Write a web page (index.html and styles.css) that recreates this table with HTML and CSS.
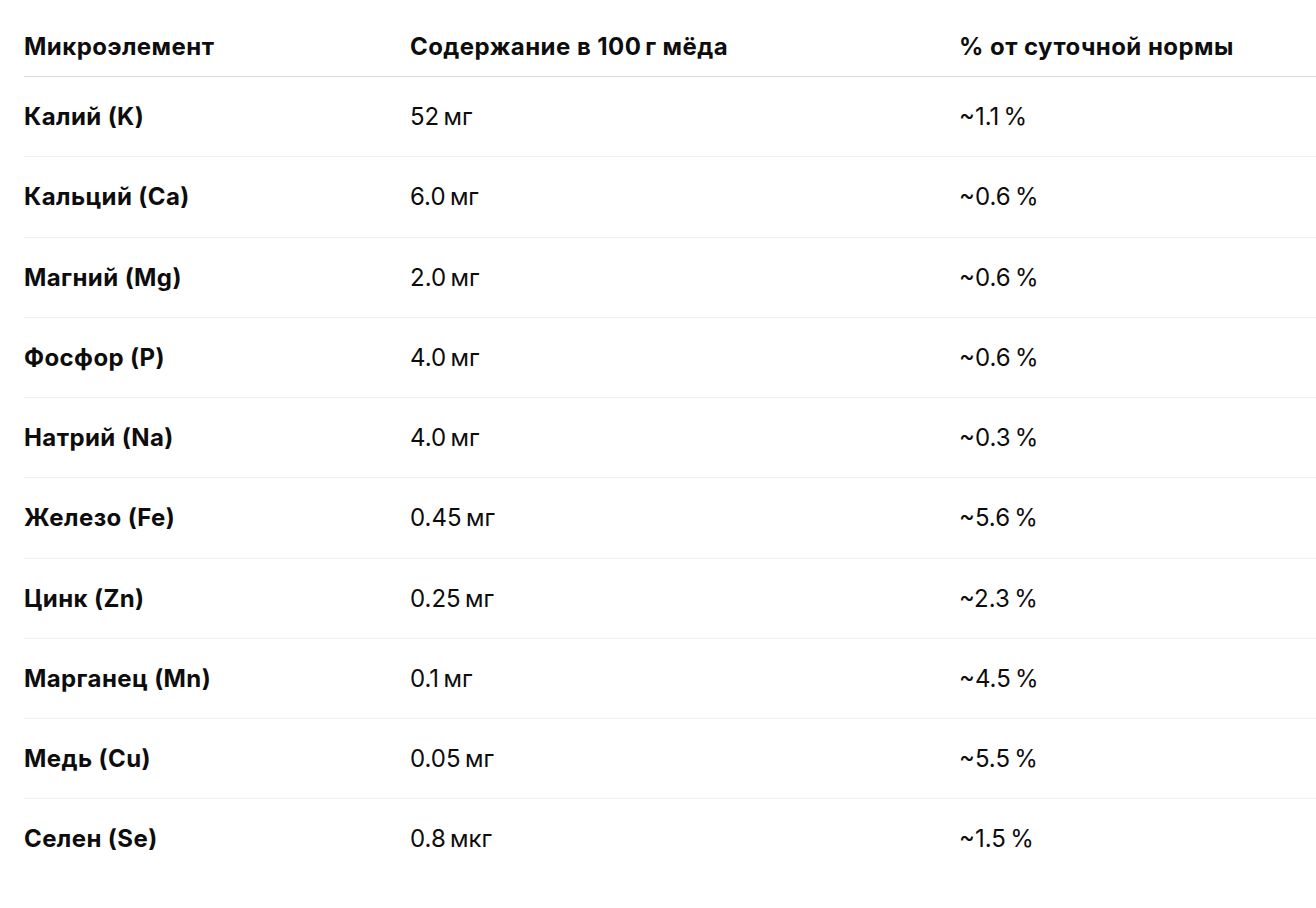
FILE: index.html
```html
<!DOCTYPE html>
<html lang="ru">
<head>
<meta charset="utf-8">
<title>Микроэлементы мёда</title>
<link rel="stylesheet" href="styles.css">
</head>
<body>
<div class="wrap">
<table class="tbl">
  <colgroup>
    <col class="c1"><col class="c2"><col class="c3">
  </colgroup>
  <thead>
    <tr><th>Микроэлемент</th><th>Содержание в 100&#8239;г мёда</th><th>% от суточной нормы</th></tr>
  </thead>
  <tbody>
    <tr><td class="name">Калий (K)</td><td>52&#8239;мг</td><td>~1.1&#8239;%</td></tr>
    <tr><td class="name">Кальций (Ca)</td><td>6.0&#8239;мг</td><td>~0.6&#8239;%</td></tr>
    <tr><td class="name">Магний (Mg)</td><td>2.0&#8239;мг</td><td>~0.6&#8239;%</td></tr>
    <tr><td class="name">Фосфор (P)</td><td>4.0&#8239;мг</td><td>~0.6&#8239;%</td></tr>
    <tr><td class="name">Натрий (Na)</td><td>4.0&#8239;мг</td><td>~0.3&#8239;%</td></tr>
    <tr><td class="name">Железо (Fe)</td><td>0.45&#8239;мг</td><td>~5.6&#8239;%</td></tr>
    <tr><td class="name">Цинк (Zn)</td><td>0.25&#8239;мг</td><td>~2.3&#8239;%</td></tr>
    <tr><td class="name">Марганец (Mn)</td><td>0.1&#8239;мг</td><td>~4.5&#8239;%</td></tr>
    <tr><td class="name">Медь (Cu)</td><td>0.05&#8239;мг</td><td>~5.5&#8239;%</td></tr>
    <tr class="last"><td class="name">Селен (Se)</td><td>0.8&#8239;мкг</td><td>~1.5&#8239;%</td></tr>
  </tbody>
</table>
</div>
</body>
</html>
```
FILE: styles.css
```css
html, body {
  margin: 0;
  padding: 0;
  background: #ffffff;
}
body {
  font-family: Inter, "Noto Sans", "Liberation Sans", sans-serif;
  color: #0d0d0d;
  overflow: hidden;
}
.wrap {
  padding: 31px 0 0 24px;
}
.tbl {
  border-collapse: collapse;
  width: 1320px;
  table-layout: fixed;
  font-size: 24px;
  line-height: 32px;
}
.c1 { width: 386px; }
.c2 { width: 549px; }
.c3 { width: auto; }
.tbl th {
  text-align: left;
  font-weight: 700;
  letter-spacing: 0.45px;
  padding: 0 0 13px 0;
  border-bottom: 1px solid #d9d9d9;
}
.tbl td {
  padding: 24px 0 23.25px 0;
  border-bottom: 1px solid #efefef;
  font-weight: 400;
}
.tbl td.name {
  font-weight: 700;
  letter-spacing: 0.4px;
}
.tbl tr.last td {
  border-bottom: none;
}
```
